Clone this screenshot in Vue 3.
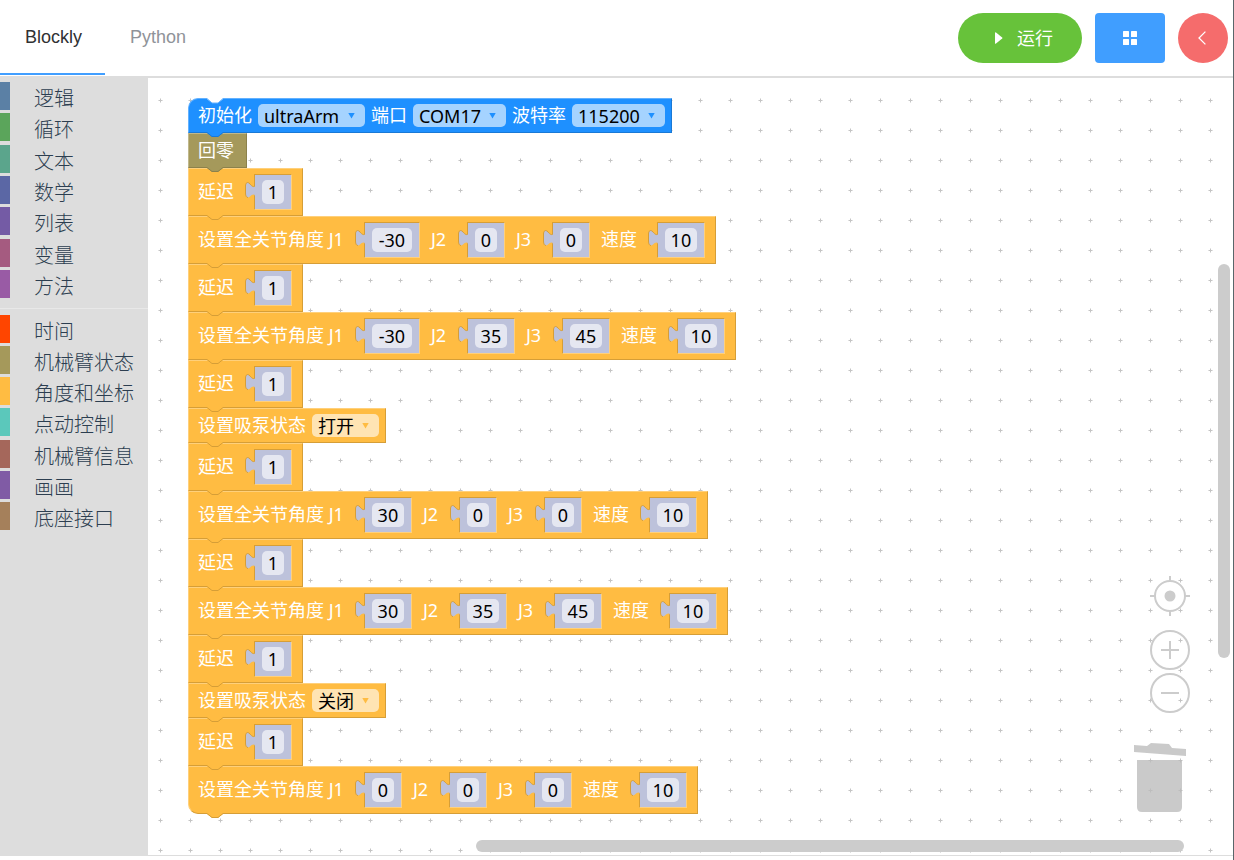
<script setup>
import { ref } from 'vue'

const tab = ref('Blockly')

const groups = [
  [
    { name: '逻辑', color: '#5b80a5' },
    { name: '循环', color: '#5ba55b' },
    { name: '文本', color: '#5ba58c' },
    { name: '数学', color: '#5b67a5' },
    { name: '列表', color: '#745ba5' },
    { name: '变量', color: '#a55b80' },
    { name: '方法', color: '#995ba5' },
  ],
  [
    { name: '时间', color: '#ff4500' },
    { name: '机械臂状态', color: '#a5995b' },
    { name: '角度和坐标', color: '#ffbc42' },
    { name: '点动控制', color: '#5bc8bb' },
    { name: '机械臂信息', color: '#a5675b' },
    { name: '画画', color: '#805ba5' },
    { name: '底座接口', color: '#a5805b' },
  ],
]

const label = (text) => ({ type: 'label', text })
const number = (value, text) => ({ type: 'number', value, text })
const choice = (value, text) => ({ type: 'choice', value, text })

const delay = () => ({ kind: 'orange', parts: [label('延迟'), number('1', '延迟')] })
const angles = (j1, j2, j3, speed) => ({
  kind: 'orange',
  parts: [
    label('设置全关节角度 J1'), number(j1, 'J1'),
    label('J2'), number(j2, 'J2'),
    label('J3'), number(j3, 'J3'),
    label('速度'), number(speed, '速度'),
  ],
})
const pump = (state) => ({
  kind: 'orange short',
  parts: [label('设置吸泵状态'), choice(state, '设置吸泵状态')],
})

const blocks = ref([
  {
    kind: 'blue short first',
    parts: [
      label('初始化'), choice('ultraArm', '初始化'),
      label('端口'), choice('COM17', '端口'),
      label('波特率'), choice('115200', '波特率'),
    ],
  },
  { kind: 'olive short', parts: [label('回零')] },
  delay(),
  angles('-30', '0', '0', '10'),
  delay(),
  angles('-30', '35', '45', '10'),
  delay(),
  pump('打开'),
  delay(),
  angles('30', '0', '0', '10'),
  delay(),
  angles('30', '35', '45', '10'),
  delay(),
  pump('关闭'),
  delay(),
  angles('0', '0', '0', '10'),
])

const fieldWidth = (value) =>
  12 + [...value].reduce((sum, c) => sum + (c === '-' ? 8 : 10), 0) + 'px'
</script>

<template>
  <div class="page">
    <header class="topbar">
      <nav class="tabs">
        <button
          v-for="name in ['Blockly', 'Python']"
          :key="name"
          class="tab"
          :class="{ active: tab === name }"
          @click="tab = name"
        >{{ name }}</button>
      </nav>
      <div class="actions">
        <button class="run">
          <svg width="8" height="14" viewBox="0 0 8 14"><path d="M0 1.8Q0 .8 1 1.4L7.2 6.4Q7.800 7 7.200 7.600L1 12.600Q0 13.200 0 12.200Z" fill="#fff" /></svg>
          <span class="run-text">运行</span>
        </button>
        <button class="panels" aria-label="布局">
          <svg width="16" height="16" viewBox="0 0 16 16" fill="#fff">
            <rect x="1" y="1" width="6" height="6" rx=".6" /><rect x="9" y="1" width="6" height="6" rx=".6" />
            <rect x="1" y="9" width="6" height="6" rx=".6" /><rect x="9" y="9" width="6" height="6" rx=".6" />
          </svg>
        </button>
        <button class="back" aria-label="返回">
          <svg width="10" height="14" viewBox="0 0 10 14"><path d="M7.4 .6L1 7L7.4 13.4" fill="none" stroke="#fff" stroke-width="1.3" /></svg>
        </button>
      </div>
    </header>

    <main class="editor">
      <aside class="toolbox">
        <ul v-for="(group, g) in groups" :key="g" class="group">
          <li v-for="item in group" :key="item.name" class="category">
            <span class="swatch" :style="{ background: item.color }"></span>
            <span class="name">{{ item.name }}</span>
          </li>
        </ul>
      </aside>

      <section class="workspace">
        <svg class="grid" width="100%" height="100%">
          <defs>
            <pattern id="dots" x="-3" y="7" width="30" height="30" patternUnits="userSpaceOnUse">
              <path d="M13 15.5H18M15.5 13V18" stroke="#e0e0e0" stroke-width="1" />
              <path d="M14 15.5H17M15.5 14V17" stroke="#c4c4c4" stroke-width="1" />
            </pattern>
          </defs>
          <rect width="100%" height="100%" fill="url(#dots)" />
        </svg>

        <div class="stack">
          <div v-for="(block, b) in blocks" :key="b" class="block" :class="block.kind">
            <svg v-if="b === 0" class="socket" width="18" height="6" viewBox="0 0 18 6">
              <path d="M0 0H18L17 1L12 5H6L1 1Z" fill="#fff" />
              <path d="M0 .5H1L6 5H12L17 .5H18" fill="none" stroke="#62b1ff" />
            </svg>
            <template v-for="(part, p) in block.parts" :key="p">
              <span v-if="part.type === 'label'" class="label">{{ part.text }}</span>
              <span v-else-if="part.type === 'number'" class="value">
                <svg class="plug" width="10" height="20" viewBox="0 0 10 20">
                  <path d="M10 4.5C10 7 7 5.500 5 3C2.500 0 .5 2 .5 5V12C.5 16 2.500 18 5 15.500C7 13 10 12.500 10 15.500Z" fill="#bdc2db" />
                  <path d="M10 4.500C9 6.500 7 5.500 5 3C2.500 0 .5 2 .5 5V12C.5 15 1.500 16.500 3 16.500" fill="none" stroke="#d69e37" />
                </svg>
                <input
                  v-model="part.value"
                  class="number"
                  type="text"
                  :aria-label="part.text"
                  :style="{ width: fieldWidth(part.value) }"
                />
              </span>
              <span v-else class="choice">
                <select class="select" :aria-label="part.text"><option>{{ part.value }}</option></select>
              </span>
            </template>
            <svg class="tongue" width="18" height="6" viewBox="0 0 18 6">
              <path class="fill" d="M0 0H18L17 1L12 5H6L1 1Z" />
              <path class="edge" d="M0 .5H1L6 4.500H12L17 .5H18" fill="none" />
            </svg>
          </div>
        </div>

        <div class="controls">
          <button class="control center" aria-label="居中">
            <svg width="40" height="40" viewBox="0 0 40 40" fill="none" stroke="#ccc" stroke-width="2">
              <circle cx="20" cy="20" r="15" /><circle cx="20" cy="20" r="5.500" fill="#ccc" stroke="none" />
              <path d="M20 0V6M20 34V40M0 20H6M34 20H40" />
            </svg>
          </button>
          <button class="control" aria-label="放大">
            <svg width="40" height="40" viewBox="0 0 40 40" fill="none" stroke="#ccc" stroke-width="2">
              <circle cx="20" cy="20" r="19" /><path d="M11 20H29M20 11V29" />
            </svg>
          </button>
          <button class="control" aria-label="缩小">
            <svg width="40" height="40" viewBox="0 0 40 40" fill="none" stroke="#ccc" stroke-width="2">
              <circle cx="20" cy="20" r="19" /><path d="M11 20H29" />
            </svg>
          </button>
          <svg class="trash" width="54" height="70" viewBox="0 0 54 70" fill="#bbb" fill-opacity=".78">
            <path d="M1 2L14 3L18 0L36 1L39 5L53 6V13L1 9Z" />
            <path d="M4 17H49V64Q49 69 44 69H9Q4 69 4 64Z" />
          </svg>
        </div>
        <div class="bar vertical"></div>
        <div class="bar horizontal"></div>
      </section>
    </main>
  </div>
</template>

<style>
body {
  margin: 0;
}
</style>

<style scoped>
.page {
  box-sizing: border-box;
  display: flex;
  flex-direction: column;
  height: 100vh;
  padding-bottom: 4px;
  border-right: 1px solid #59666a;
  background: #fff;
  font-family: "Noto Sans", "Noto Sans CJK SC", sans-serif;
}
button {
  display: flex;
  align-items: center;
  justify-content: center;
  border: 0;
  padding: 0;
  background: none;
  cursor: pointer;
}
.topbar {
  display: flex;
  justify-content: space-between;
  border-bottom: 2px solid #ddd;
}
.tabs {
  display: flex;
}
.tab {
  height: 75px;
  padding: 2px 23px 0 25px;
  border-bottom: 2px solid transparent;
  color: #909399;
  font: 18px "Liberation Sans", sans-serif;
}
.tab.active {
  border-color: #409eff;
  color: #303133;
}
.actions {
  display: flex;
  align-items: center;
  gap: 13px;
  height: 76px;
  padding-right: 5px;
}
.run {
  box-sizing: border-box;
  gap: 14px;
  width: 124px;
  height: 50px;
  padding-left: 8px;
  border-radius: 25px;
  background: #67c23a;
  color: #fff;
  font: 400 18px "Noto Sans CJK SC", sans-serif;
}
.run-text {
  padding-bottom: 3px;
}
.panels {
  width: 70px;
  height: 50px;
  border-radius: 4px;
  background: #409eff;
}
.back {
  width: 50px;
  height: 50px;
  border-radius: 50%;
  background: #f56c6c;
}
.editor {
  flex: 1;
  display: flex;
  min-height: 0;
  border-bottom: 1px solid #ddd;
}
.toolbox {
  width: 148px;
  background: #ddd;
}
.group {
  display: flex;
  flex-direction: column;
  justify-content: space-between;
  min-height: 216px;
  margin: 0;
  padding: 4px 0 10px;
  list-style: none;
}
.group + .group {
  min-height: 215px;
  padding-top: 6px;
  border-top: 1px solid #e8e8e8;
}
.category {
  display: flex;
  height: 28px;
  gap: 24px;
}
.swatch {
  width: 10px;
}
.name {
  padding-top: 3px;
  color: #2c3e50;
  font-size: 20px;
  font-weight: 300;
  line-height: 28px;
  white-space: nowrap;
}
.workspace {
  position: relative;
  flex: 1;
  min-width: 0;
  overflow: hidden;
}
.grid {
  position: absolute;
  inset: 0;
}
.stack {
  position: relative;
  display: flex;
  flex-direction: column;
  align-items: flex-start;
  padding: 20px 0 0 40px;
}
.block {
  --fill: #ffbc42;
  --light: #ffd07b;
  --dark: #d69e37;
  --field: #ffe4b3;
  position: relative;
  box-sizing: border-box;
  display: flex;
  align-items: center;
  gap: 11px;
  height: 48px;
  padding: 0 10px 0 9px;
  border: 1px solid;
  border-color: var(--light) var(--dark) var(--dark) var(--light);
  background: var(--fill);
  color: #fff;
  font-size: 18px;
  line-height: 24px;
  white-space: pre;
}
.block.short {
  gap: 6px;
  height: 35px;
  padding-right: 6px;
}
.blue {
  --fill: #1e90ff;
  --light: #62b1ff;
  --dark: #1979d6;
  --field: #a5d3ff;
}
.olive {
  --fill: #a5995b;
  --light: #c0b88c;
  --dark: #8b814c;
}
.block.olive {
  padding-right: 12px;
}
.block.first {
  border-top-left-radius: 10px;
}
.block:last-child {
  border-bottom-left-radius: 10px;
}
.label {
  min-width: 16px;
  padding-bottom: 2px;
}
.socket,
.tongue {
  position: absolute;
  left: 17px;
}
.socket {
  top: -1px;
}
.tongue {
  z-index: 1;
  top: 100%;
}
.fill {
  fill: var(--fill);
}
.edge {
  stroke: var(--dark);
}
.value {
  position: relative;
  box-sizing: border-box;
  display: flex;
  align-items: center;
  height: 36px;
  margin-left: 9px;
  padding: 0 7px;
  border: 1px solid;
  border-color: var(--dark) var(--light) var(--light) var(--dark);
  background: #bdc2db;
}
.plug {
  position: absolute;
  top: 6px;
  left: -10px;
}
.number {
  box-sizing: border-box;
  height: 24px;
  padding: 0;
  border: 0;
  border-radius: 5px;
  background: #e5e7f1;
  color: #000;
  font: inherit;
  text-align: center;
}
.choice {
  display: flex;
  align-items: center;
  gap: 8px;
  height: 23px;
  padding: 0 10px 0 6px;
  border-radius: 5px;
  background: var(--field);
}
.choice::after {
  content: "";
  width: 7px;
  height: 6px;
  background: var(--fill);
  clip-path: polygon(0 0, 100% 0, 50% 100%);
}
.select {
  appearance: none;
  padding: 0;
  border: 0;
  background: none;
  color: #000;
  font: inherit;
}
.controls {
  position: absolute;
  right: 43px;
  bottom: 42px;
  display: flex;
  flex-direction: column;
  align-items: flex-end;
}
.control {
  width: 40px;
  height: 40px;
  margin-bottom: 3px;
}
.control.center {
  margin-bottom: 14px;
}
.trash {
  margin-top: 27px;
  margin-right: 3px;
}
.bar {
  position: absolute;
  border-radius: 6px;
  background: #ccc;
}
.vertical {
  top: 24%;
  right: 3px;
  bottom: 25.4%;
  width: 12px;
}
.horizontal {
  right: 49px;
  bottom: 3px;
  left: 328px;
  height: 12px;
}
</style>
